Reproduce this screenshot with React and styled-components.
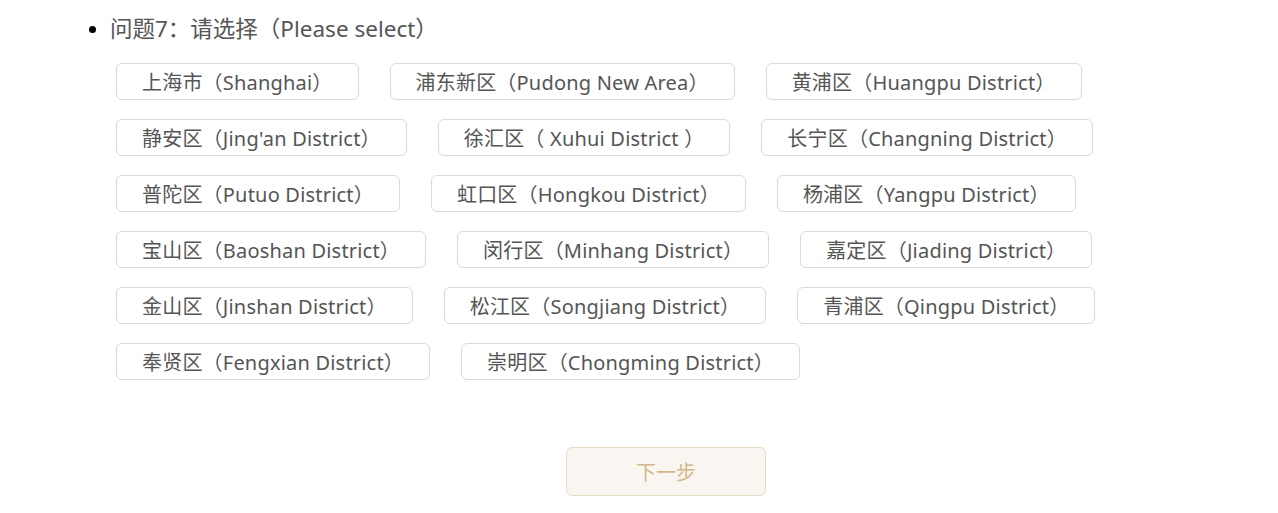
import React from 'react';
import styled, { createGlobalStyle } from 'styled-components';

const GlobalStyle = createGlobalStyle`
    body {
        margin: 0;
        background: #fff;
        font-family: "Noto Sans", "Noto Sans CJK SC", sans-serif;
        color: #555;
    }
`;

const Page = styled.div`
    padding: 11px 0 0 70px;
`;

const QuestionList = styled.ul`
    margin: 0;
    padding-left: 40px;
    list-style: disc;
`;

const Question = styled.li`
    font-size: 22.5px;
    line-height: 36px;
    color: #555;
    &::marker {
        color: #000;
        font-size: 20px;
    }
`;

const Options = styled.div`
    display: flex;
    flex-wrap: wrap;
    column-gap: 31px;
    row-gap: 19px;
    width: 1100px;
    margin: 16px 0 0 6px;
`;

const Option = styled.button`
    box-sizing: border-box;
    height: 37px;
    padding: 0 25px;
    border: 1px solid #dadada;
    border-radius: 6px;
    background: ${p => (p.$active ? '#f9f6f1' : '#fff')};
    font-family: inherit;
    font-size: 20px;
    letter-spacing: 0.2px;
    color: #555;
    cursor: pointer;
    white-space: nowrap;
`;

const Footer = styled.div`
    display: flex;
    justify-content: center;
    width: 1100px;
    margin: 67px 0 0 46px;
`;

const NextButton = styled.button`
    box-sizing: border-box;
    width: 200px;
    height: 49px;
    border: 1px solid #e8dcc3;
    border-radius: 6px;
    background: #f9f6f1;
    font-family: inherit;
    font-size: 20px;
    color: #d2b88c;
    cursor: not-allowed;
`;

const districts = [
    '上海市（Shanghai）',
    '浦东新区（Pudong New Area）',
    '黄浦区（Huangpu District）',
    "静安区（Jing'an District）",
    '徐汇区（ Xuhui District ）',
    '长宁区（Changning District）',
    '普陀区（Putuo District）',
    '虹口区（Hongkou District）',
    '杨浦区（Yangpu District）',
    '宝山区（Baoshan District）',
    '闵行区（Minhang District）',
    '嘉定区（Jiading District）',
    '金山区（Jinshan District）',
    '松江区（Songjiang District）',
    '青浦区（Qingpu District）',
    '奉贤区（Fengxian District）',
    '崇明区（Chongming District）',
];

export default function App() {
    const [selected, setSelected] = React.useState(null);
    return (
        <Page>
            <GlobalStyle />
            <QuestionList>
                <Question>
                    问题7：请选择（Please select）
                    <Options>
                        {districts.map(d => (
                            <Option key={d} $active={selected === d} onClick={() => setSelected(d)}>
                                {d}
                            </Option>
                        ))}
                    </Options>
                </Question>
            </QuestionList>
            <Footer>
                <NextButton disabled={!selected}>下一步</NextButton>
            </Footer>
        </Page>
    );
}
